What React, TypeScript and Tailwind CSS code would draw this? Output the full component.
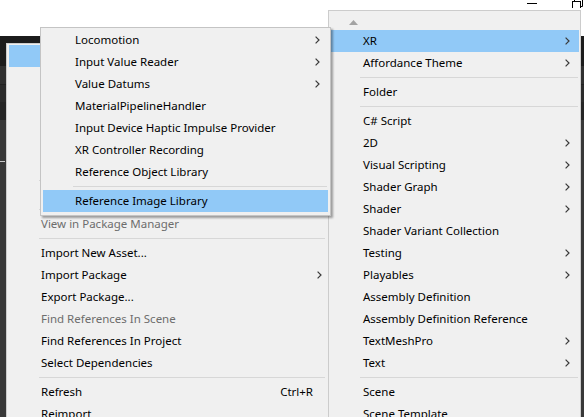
import React from "react";

type It = { label?: string; arrow?: boolean; shortcut?: string; disabled?: boolean; hl?: boolean; sep?: boolean };

const Chevron = () => (
  <svg width="5" height="8" viewBox="0 0 5 8" className="shrink-0">
    <polyline points="0.6,0.6 4,4 0.6,7.4" fill="none" stroke="#3a3a3a" strokeWidth="1.2" />
  </svg>
);

function Row({ it, pl, pr }: { it: It; pl: string; pr: string }) {
  if (it.sep) {
    return (
      <div className="h-[7px] flex items-center">
        <div className="h-px w-full ml-[30px] mr-[1px] bg-[#d7d7d7]" />
      </div>
    );
  }
  return (
    <div className={`h-[22px] flex items-center ${it.hl ? "bg-[#91c9f7]" : ""} ${pl} ${pr}`}>
      <span className={`flex-1 whitespace-nowrap ${it.disabled ? "text-[#6d6d6d]" : "text-black"}`}>{it.label}</span>
      {it.shortcut && <span className="text-black mr-[9px]">{it.shortcut}</span>}
      {it.arrow && <Chevron />}
    </div>
  );
}

// rows hidden behind the XR submenu carry no visible label
const leftItems: It[] = [
  { hl: true },
  {},
  {},
  {},
  {},
  {},
  { sep: true },
  {},
  { sep: true },
  { label: "View in Package Manager", disabled: true },
  { sep: true },
  { label: "Import New Asset..." },
  { label: "Import Package", arrow: true },
  { label: "Export Package..." },
  { label: "Find References In Scene", disabled: true },
  { label: "Find References In Project" },
  { label: "Select Dependencies" },
  { sep: true },
  { label: "Refresh", shortcut: "Ctrl+R" },
  { label: "Reimport" },
];

const subItems: It[] = [
  { label: "Locomotion", arrow: true },
  { label: "Input Value Reader", arrow: true },
  { label: "Value Datums", arrow: true },
  { label: "MaterialPipelineHandler" },
  { label: "Input Device Haptic Impulse Provider" },
  { label: "XR Controller Recording" },
  { label: "Reference Object Library" },
  { sep: true },
  { label: "Reference Image Library", hl: true },
];

const rightItems: It[] = [
  { label: "XR", arrow: true, hl: true },
  { label: "Affordance Theme", arrow: true },
  { sep: true },
  { label: "Folder" },
  { sep: true },
  { label: "C# Script" },
  { label: "2D", arrow: true },
  { label: "Visual Scripting", arrow: true },
  { label: "Shader Graph", arrow: true },
  { label: "Shader", arrow: true },
  { label: "Shader Variant Collection" },
  { label: "Testing", arrow: true },
  { label: "Playables", arrow: true },
  { label: "Assembly Definition" },
  { label: "Assembly Definition Reference" },
  { label: "TextMeshPro", arrow: true },
  { label: "Text", arrow: true },
  { sep: true },
  { label: "Scene" },
  { label: "Scene Template" },
];

export default function App() {
  return (
    <div
      className="relative w-[584px] h-[417px] overflow-hidden bg-white flex flex-col text-[11.5px] leading-none"
      style={{ fontFamily: '"Noto Sans", "Liberation Sans", sans-serif' }}
    >
      {/* title bar */}
      <div className="h-[36px] bg-white flex justify-end items-start shrink-0">
        <div className="mt-[3px] w-[10px] h-px bg-black mr-[35px]" />
        <svg width="12" height="8" viewBox="0 0 12 8">
          <rect x="0.5" y="1.5" width="8" height="7" fill="none" stroke="#000" strokeWidth="1" />
          <polyline points="2.5,1.5 2.5,-0.5 11.5,-0.5" fill="none" stroke="#000" strokeWidth="1" />
          <polyline points="10.5,0 10.5,6.5 9,6.5" fill="none" stroke="#000" strokeWidth="1" />
        </svg>
      </div>
      {/* editor body */}
      <div className="flex-1 flex flex-col bg-[#383838]">
        <div className="h-[30px] bg-[#1c1c1c]" />
        <div className="h-[18px] bg-[#303030]" />
        <div className="h-px bg-[#222222]" />
        <div className="h-[17px] bg-[#2b2b2b]" />
        <div className="h-[18px] bg-[#252525]" />
        <div className="h-[41px]" />
        <div className="w-[5px] h-px bg-[#c8c8c8]" />
      </div>

      {/* main context menu */}
      <div className="absolute left-[6px] top-[43px] w-[323px] h-[390px] bg-[#f0f0f0] border border-[#cccccc] pt-[1px] px-[2px]">
        {leftItems.map((it, i) => (
          <Row key={i} it={it} pl="pl-[32px]" pr="pr-[4px]" />
        ))}
      </div>

      {/* right create menu */}
      <div className="absolute left-[328px] top-[10px] w-[253px] h-[420px] bg-[#f0f0f0] border border-[#cccccc] px-[1px]">
        <div className="h-[19px] flex items-center pl-[19px]">
          <svg width="9" height="5" viewBox="0 0 9 5" className="mt-[3px]">
            <polygon points="0,5 4.5,0 9,5" fill="#a3a3a3" />
          </svg>
        </div>
        {rightItems.map((it, i) => (
          <Row key={i} it={it} pl="pl-[33px]" pr="pr-[9px]" />
        ))}
      </div>

      {/* XR submenu */}
      <div className="absolute left-[40px] top-[27px] w-[291px] bg-[#f0f0f0] border border-[#c4c4c4] pt-[1px] pb-[3px] px-[2px] shadow-[2px_2px_2px_rgba(0,0,0,0.35)]">
        {subItems.map((it, i) => (
          <Row key={i} it={it} pl="pl-[32px]" pr="pr-[8px]" />
        ))}
      </div>
    </div>
  );
}
